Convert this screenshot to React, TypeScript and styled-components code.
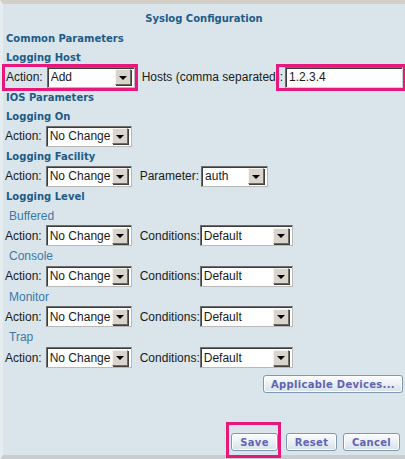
import React from 'react'
import styled, { createGlobalStyle } from 'styled-components'

const HEADING = '#215b88'
const SUBHEADING = '#3c78a6'
const PINK = '#e8177c'

const GlobalStyle = createGlobalStyle`
  html, body {
    margin: 0;
    padding: 0;
    background: #d7e3ea;
  }
  * { box-sizing: border-box; }
`

const Page = styled.div`
  width: 405px;
  height: 459px;
  background-color: #d7e3ea;
  background-image:
    linear-gradient(90deg, rgba(255,255,255,0.06) 50%, transparent 50%),
    linear-gradient(rgba(255,255,255,0.06) 50%, transparent 50%);
  background-size: 2px 2px;
  border-top: 4px solid #d3cfc6;
  border-left: 3px solid #e6edf1;
  border-bottom: 4px solid #c9cdcf;
  padding-left: 2px;
  display: flex;
  flex-direction: column;
  font-family: 'Liberation Sans', Arial, sans-serif;
  font-size: 12px;
  color: #1a1a1a;
`

const Title = styled.div`
  height: 20px;
  margin-top: 5px;
  display: flex;
  align-items: center;
  justify-content: center;
  padding-right: 2px;
  font-family: 'DejaVu Sans', Verdana, sans-serif;
  font-weight: bold;
  font-size: 10px;
  color: ${HEADING};
`

const Heading = styled.div`
  height: 19px;
  display: flex;
  align-items: center;
  padding-left: 1px;
  font-family: 'DejaVu Sans', Verdana, sans-serif;
  font-weight: bold;
  font-size: 10px;
  color: ${HEADING};
`

const SubHeading = styled.div`
  height: 19.6px;
  display: flex;
  align-items: center;
  padding-left: 4px;
  color: ${SUBHEADING};
`

const Row = styled.div`
  height: 21px;
  display: flex;
  align-items: center;
`

const Label = styled.span<{ $gap?: number; $lead?: number }>`
  margin-left: ${({ $lead }) => $lead ?? 0}px;
  margin-right: ${({ $gap }) => $gap ?? 4}px;
  white-space: nowrap;
`

const Highlight = styled.div`
  display: flex;
  align-items: center;
  outline: 3px solid ${PINK};
`

const SelectBox = styled.div<{ $width: number }>`
  width: ${({ $width }) => $width}px;
  height: 21px;
  background: #fff;
  border: 1px solid;
  border-color: #6e6e6e #b9b9b9 #b9b9b9 #6e6e6e;
  box-shadow: inset 1px 1px 0 #3c3c3c;
  display: flex;
  align-items: center;
  padding: 1px 1px 1px 3px;
`

const SelectText = styled.span`
  flex: 1;
  white-space: nowrap;
  overflow: hidden;
`

const ArrowButton = styled.span`
  width: 16px;
  height: 16px;
  flex-shrink: 0;
  background: #d9d5cc;
  border: 1px solid;
  border-color: #f6f4ef #6d6a64 #6d6a64 #f6f4ef;
  box-shadow: 1px 1px 0 #403e3a;
  display: flex;
  align-items: center;
  justify-content: center;
  margin-right: 2px;
`

const Arrow = styled.span`
  width: 0;
  height: 0;
  border-left: 4px solid transparent;
  border-right: 4px solid transparent;
  border-top: 4px solid #000;
  margin-top: 1px;
`

const TextInput = styled.div`
  width: 118px;
  height: 21px;
  margin-left: 2px;
  background: #fff;
  border: 1px solid;
  border-color: #6e6e6e #d0d0d0 #d0d0d0 #6e6e6e;
  box-shadow: inset 1px 1px 0 #3c3c3c;
  padding-left: 3px;
  display: flex;
  align-items: center;
`

const Colon = styled.span`
  margin-left: 1px;
`

const DevicesRow = styled.div`
  display: flex;
  justify-content: flex-end;
  padding-right: 2px;
  margin-top: 7px;
`

const ActionsRow = styled.div`
  display: flex;
  justify-content: flex-end;
  align-items: flex-start;
  gap: 6px;
  padding-right: 5px;
  margin-top: 32px;
`

const SaveHighlight = styled.div`
  outline: 3px solid ${PINK};
  padding: 8px 0 4px 2px;
  width: 49px;
  margin-right: 2px;
`

const Button = styled.button<{ $width: number; $top?: number }>`
  width: ${({ $width }) => $width}px;
  height: 18px;
  margin-top: ${({ $top }) => $top ?? 0}px;
  padding: 0;
  border: 1px solid #7f9ab0;
  border-radius: 3px;
  background: linear-gradient(#fbfdfe, #e8eef3 55%, #d8e2ea);
  box-shadow: inset 0 0 0 1px #ffffff;
  font-family: 'DejaVu Sans', Verdana, sans-serif;
  font-weight: bold;
  font-size: 10px;
  letter-spacing: 0.3px;
  color: #6064b4;
  display: flex;
  align-items: center;
  justify-content: center;
`

const Select = ({ value, width }: { value: string; width: number }) => (
  <SelectBox $width={width}>
    <SelectText>{value}</SelectText>
    <ArrowButton><Arrow /></ArrowButton>
  </SelectBox>
)

const LevelBlock = ({ name }: { name: string }) => (
  <>
    <SubHeading>{name}</SubHeading>
    <Row>
      <Label>Action:</Label>
      <Select value="No Change" width={86} />
      <Label $lead={8} $gap={0}>Conditions:</Label>
      <Select value="Default" width={93} />
    </Row>
  </>
)

const App = (): JSX.Element => {
  return (
    <>
      <GlobalStyle />
      <Page>
        <Title>Syslog Configuration</Title>
        <Heading>Common Parameters</Heading>
        <Heading>Logging Host</Heading>
        <Row>
          <Highlight>
            <Label $lead={1}>Action:</Label>
            <Select value="Add" width={88} />
          </Highlight>
          <Label $lead={7} $gap={0}>Hosts (comma separated)</Label>
          <Highlight style={{ marginLeft: -1 }}>
            <Colon>:</Colon>
            <TextInput>1.2.3.4</TextInput>
          </Highlight>
        </Row>
        <Heading>IOS Parameters</Heading>
        <Heading>Logging On</Heading>
        <Row>
          <Label>Action:</Label>
          <Select value="No Change" width={86} />
        </Row>
        <Heading>Logging Facility</Heading>
        <Row>
          <Label>Action:</Label>
          <Select value="No Change" width={86} />
          <Label $lead={8} $gap={2}>Parameter:</Label>
          <Select value="auth" width={67} />
        </Row>
        <Heading>Logging Level</Heading>
        <LevelBlock name="Buffered" />
        <LevelBlock name="Console" />
        <LevelBlock name="Monitor" />
        <LevelBlock name="Trap" />
        <DevicesRow>
          <Button $width={140}>Applicable Devices...</Button>
        </DevicesRow>
        <ActionsRow>
          <SaveHighlight>
            <Button $width={47}>Save</Button>
          </SaveHighlight>
          <Button $width={51} $top={8}>Reset</Button>
          <Button $width={57} $top={8}>Cancel</Button>
        </ActionsRow>
      </Page>
    </>
  )
}

export default App
